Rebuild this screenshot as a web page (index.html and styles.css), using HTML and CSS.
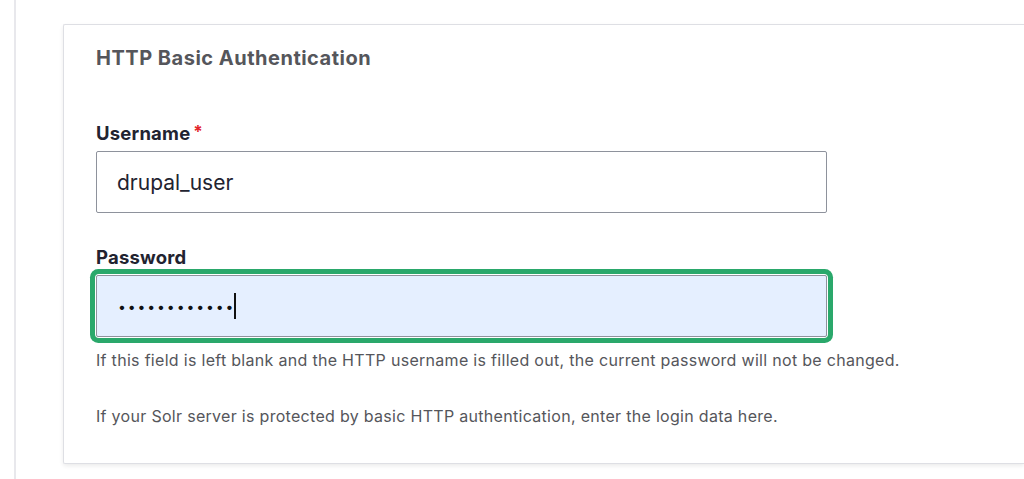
FILE: index.html
```html
<!DOCTYPE html>
<html lang="en">
<head>
<meta charset="utf-8">
<title>HTTP Basic Authentication</title>
<link rel="stylesheet" href="styles.css">
</head>
<body>
<div class="page">
  <fieldset class="card">
    <h2 class="card-title">HTTP Basic Authentication</h2>
    <div class="field">
      <label class="label" for="user">Username<span class="req">*</span></label>
      <div class="input">drupal_user</div>
    </div>
    <div class="field field-pass">
      <label class="label" for="pass">Password</label>
      <div class="focus-ring">
        <div class="input input-focus"><span class="dots">••••••••••••</span><span class="caret"></span></div>
      </div>
      <p class="help">If this field is left blank and the HTTP username is filled out, the current password will not be changed.</p>
    </div>
    <p class="desc">If your Solr server is protected by basic HTTP authentication, enter the login data here.</p>
  </fieldset>
</div>
</body>
</html>
```

FILE: styles.css
```css
html, body {
  margin: 0;
  padding: 0;
  background: #ffffff;
  height: 100%;
  overflow: hidden;
}
body {
  font-family: Inter, "Liberation Sans", sans-serif;
  color: #222330;
}
.page {
  margin-left: 14px;
  border-left: 2px solid #e8e8ec;
  min-height: 100%;
  padding: 24px 0 0 47px;
  box-sizing: border-box;
}
.card {
  margin: 0;
  border: 1px solid #dedfe4;
  border-right: none;
  border-radius: 2px 0 0 2px;
  box-shadow: 0 2px 4px rgba(0, 0, 0, 0.08);
  padding: 18px 0 32px 32px;
  height: 440px;
  box-sizing: border-box;
  background: #fff;
}
.card-title {
  margin: 0;
  font-size: 20px;
  letter-spacing: 0.5px;
  line-height: 30px;
  font-weight: 700;
  color: #55565b;
}
.field {
  margin-top: 48px;
}
.label {
  display: block;
  font-size: 18.5px;
  letter-spacing: 0.2px;
  line-height: 22px;
  font-weight: 700;
  color: #222330;
  margin-bottom: 7px;
}
.req {
  color: #e3262b;
  margin-left: 3px;
  font-size: 17px;
  vertical-align: 2px;
}
.input {
  width: 731px;
  height: 62px;
  box-sizing: border-box;
  border: 1px solid #8e929c;
  border-radius: 2px;
  padding: 0 20px;
  display: flex;
  align-items: center;
  font-size: 21px;
  color: #222330;
  background: #fff;
}
.field-pass {
  margin-top: 33px;
}
.focus-ring {
  width: 731px;
  border-radius: 3px;
  box-shadow: 0 0 0 1px #fff, 0 0 0 6px #2aa86b;
}
.input-focus {
  background: #e5efff;
  border-color: #8e929c;
  padding-left: 21px;
}
.dots {
  font-size: 14px;
  letter-spacing: 1.9px;
  color: #111;
}
.caret {
  display: inline-block;
  width: 1.5px;
  height: 26px;
  background: #111;
  margin-left: -1px;
}
.help {
  margin: 13px 0 0;
  font-size: 16px;
  letter-spacing: 0.3px;
  line-height: 20px;
  color: #55565b;
}
.desc {
  margin: 36px 0 0;
  font-size: 16px;
  letter-spacing: 0.3px;
  line-height: 20px;
  color: #55565b;
}
```
